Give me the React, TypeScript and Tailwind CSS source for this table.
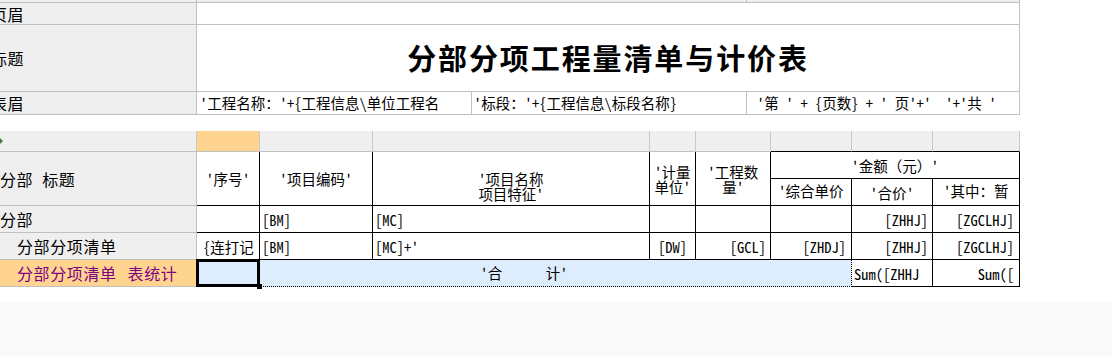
import React from "react";

// report band designer: page bands on top, the data band grid below
const COLS = "grid grid-cols-[197px_63px_113px_277px_46px_75px_81px_81px_87px]";
const BAND_COLS = "grid grid-cols-[197px_275px_275px_273px]";
const FONT = "font-['Noto_Sans_Mono_CJK_SC','Noto_Sans_CJK_SC',sans-serif]";

const label =
  "flex items-center overflow-hidden whitespace-pre border-b border-r border-[#c0c0c0] bg-[#efefef] text-[16px] tracking-[0.6px]";
const cell =
  "flex items-center overflow-hidden whitespace-pre border-b border-r border-black bg-white text-[14.5px] leading-[15px]";
const colHead = "h-[21px] border-b border-r border-[#c8c8c8] bg-[#efefef]";

const App = () => {
  return (
    <div className={`flex h-[356px] w-[1112px] flex-col overflow-hidden bg-white text-black ${FONT}`}>
      {/* band above, mostly scrolled away */}
      <div className="flex h-[3px] w-[1020px] border-b border-[#c0c0c0] bg-[#efefef]">
        <div className="w-[197px] border-r border-[#c0c0c0]" />
        <div className="w-[550px] border-r border-[#c0c0c0]" />
        <div className="flex-1 border-r border-[#c0c0c0]" />
      </div>

      <div className={`${BAND_COLS} w-[1020px]`}>
        <div className={`${label} h-[22px]`}>
          <span className="-ml-[9px]">页眉</span>
        </div>
        <div className="col-span-3 h-[22px] border-b border-r border-[#c0c0c0]" />

        <div className={`${label} h-[67px]`}>
          <span className="-ml-[9px]">标题</span>
        </div>
        <div className="col-span-3 flex h-[67px] items-center justify-center border-b border-r border-[#c0c0c0] font-['Noto_Sans_CJK_SC',sans-serif] text-[29px] font-bold tracking-[1.9px]">
          分部分项工程量清单与计价表
        </div>

        <div className={`${label} h-[23px]`}>
          <span className="-ml-[9px]">表眉</span>
        </div>
        <div className="flex h-[23px] items-center overflow-hidden whitespace-pre border-b border-r border-[#c0c0c0] pl-[3px] text-[14.5px]">
          {"'工程名称：'+{工程信息\\单位工程名"}
        </div>
        <div className="flex h-[23px] items-center overflow-hidden whitespace-pre border-b border-r border-[#c0c0c0] pl-[2px] text-[14.5px]">
          {"'标段：'+{工程信息\\标段名称}"}
        </div>
        <div className="flex h-[23px] items-center overflow-hidden whitespace-pre border-b border-r border-[#c0c0c0] pl-[10px] text-[14.5px]">
          {"'第 ' + {页数} + ' 页'+'  '+'共 '"}
        </div>
      </div>

      <div className="h-[16px]" />

      {/* column headers */}
      <div className={`${COLS} w-[1020px]`}>
        <div className={`${colHead} flex items-center border-b-[#c0c0c0]`}>
          <svg width="3" height="6" viewBox="0 0 3 6" className="-mt-[1px]">
            <path d="M0 0 L3 3 L0 6 Z" fill="#3f7a3f" />
          </svg>
        </div>
        <div className="h-[21px] border-b border-r border-[#c8c8c8] border-b-[#c0c0c0] bg-[#ffd48f]" />
        <div className={`${colHead} border-b-[#c0c0c0]`} />
        <div className={`${colHead} border-b-[#c0c0c0]`} />
        <div className={`${colHead} border-b-[#c0c0c0]`} />
        <div className={`${colHead} border-b-[#c0c0c0]`} />
        <div className={`${colHead} border-b-black`} />
        <div className={`${colHead} border-b-black`} />
        <div className={`${colHead} border-b-black`} />
      </div>

      {/* header rows */}
      <div className={`${COLS} w-[1020px] grid-rows-[27px_27px]`}>
        <div className={`${label} row-span-2`}>
          分部<span className="ml-[9px]">标题</span>
        </div>
        <div className={`${cell} row-span-2 justify-center`}>{"'序号'"}</div>
        <div className={`${cell} row-span-2 justify-center`}>{"'项目编码'"}</div>
        <div className={`${cell} row-span-2 justify-center whitespace-pre-line pt-[14px] text-center`}>
          {"'项目名称\n项目特征'"}
        </div>
        <div className={`${cell} row-span-2 justify-center whitespace-pre-line text-center`}>
          {"'计量\n单位'"}
        </div>
        <div className={`${cell} row-span-2 justify-center whitespace-pre-line text-center`}>
          {"'工程数\n量'"}
        </div>
        <div className={`${cell} col-span-3 justify-center`}>{"'金额（元）'"}</div>
        <div className={`${cell} justify-center pb-[4px]`}>{"'综合单价"}</div>
        <div className={`${cell} justify-center`}>{"'合价'"}</div>
        <div className={`${cell} justify-center pb-[4px]`}>{"'其中：暂"}</div>
      </div>

      {/* 分部 */}
      <div className={`${COLS} w-[1020px]`}>
        <div className={`${label} h-[27px]`}>分部</div>
        <div className={cell} />
        <div className={`${cell} pl-[2px]`}>[BM]</div>
        <div className={`${cell} pl-[2px]`}>[MC]</div>
        <div className={cell} />
        <div className={cell} />
        <div className={cell} />
        <div className={`${cell} justify-end pr-[4px]`}>[ZHHJ]</div>
        <div className={`${cell} justify-end pr-[5px]`}>[ZGCLHJ]</div>
      </div>

      {/* 分部分项清单 */}
      <div className={`${COLS} w-[1020px]`}>
        <div className={`${label} h-[27px] pl-[17px]`}>分部分项清单</div>
        <div className={`${cell} pl-[6px]`}>{"{连打记"}</div>
        <div className={`${cell} pl-[2px]`}>[BM]</div>
        <div className={`${cell} pl-[2px]`}>{"[MC]+'"}</div>
        <div className={`${cell} justify-center`}>[DW]</div>
        <div className={`${cell} justify-end pr-[4px]`}>[GCL]</div>
        <div className={`${cell} justify-end pr-[5px]`}>[ZHDJ]</div>
        <div className={`${cell} justify-end pr-[4px]`}>[ZHHJ]</div>
        <div className={`${cell} justify-end pr-[5px]`}>[ZGCLHJ]</div>
      </div>

      {/* 表统计, selected */}
      <div className={`${COLS} w-[1020px]`}>
        <div className={`${label} h-[27px] bg-[#ffd48f] pl-[17px] text-[#800080]`}>
          分部分项清单<span className="ml-[11px]">表统计</span>
        </div>
        <div className="relative col-span-6 flex h-[27px] items-center justify-center whitespace-pre border-b border-r border-dotted border-black bg-[#ddedfd] text-[14.5px]">
          {"'合      计'"}
          <div className="absolute -left-[1px] -top-[1px] h-[28px] w-[64px] border-[3px] border-black" />
          <div className="absolute left-[60px] top-[24px] h-[5px] w-[5px] bg-black" />
        </div>
        <div className={`${cell} pl-[2px]`}>Sum([ZHHJ</div>
        <div className={`${cell} justify-end pr-[5px]`}>Sum([</div>
      </div>

      <div className="h-[14px]" />
      <div className="flex-1 bg-[#fafafa]" />
    </div>
  );
};

export default App;
